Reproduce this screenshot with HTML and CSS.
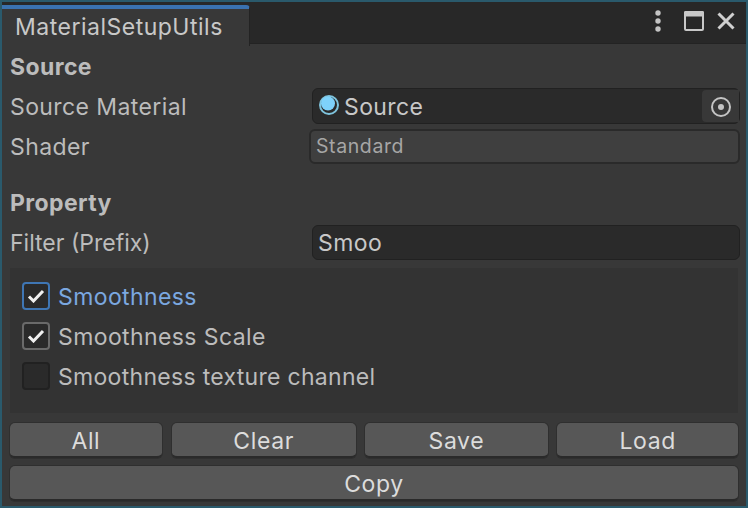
FILE: index.html
```html
<!DOCTYPE html>
<html lang="en">
<head>
<meta charset="utf-8">
<title>MaterialSetupUtils</title>
<link rel="stylesheet" href="styles.css">
</head>
<body>
<div class="window">
  <div class="tabbar">
    <div class="tab"><span>MaterialSetupUtils</span></div>
    <div class="win-icons">
      <svg class="ic-dots" width="8" height="24" viewBox="0 0 8 24"><circle cx="4" cy="4" r="2.7"/><circle cx="4" cy="12" r="2.7"/><circle cx="4" cy="20" r="2.7"/></svg>
      <svg class="ic-max" width="20" height="20" viewBox="0 0 20 20"><path class="max-top" d="M0 1.5a1.5 1.5 0 0 1 1.5-1.5h17a1.5 1.5 0 0 1 1.5 1.5v4H0z"/><rect class="max-box" x="1" y="1" width="18" height="18" rx="1"/></svg>
      <svg class="ic-close" width="18" height="18" viewBox="0 0 18 18"><path d="M1.5 1.5l15 15M16.5 1.5l-15 15"/></svg>
    </div>
  </div>
  <div class="content">
    <div class="heading h-source">Source</div>
    <div class="row r-material">
      <div class="label">Source Material</div>
      <div class="objfield">
        <svg class="ic-mat" width="20" height="20" viewBox="0 0 20 20"><circle class="mat-ring" cx="10" cy="10" r="9"/><circle class="mat-ball" cx="9" cy="8.5" r="7"/></svg>
        <span class="objname">Source</span>
        <div class="picker"><svg width="20" height="20" viewBox="0 0 20 20"><circle class="pick-ring" cx="10" cy="10" r="9"/><circle class="pick-dot" cx="10" cy="10" r="3"/></svg></div>
      </div>
    </div>
    <div class="row r-shader">
      <div class="label">Shader</div>
      <div class="shaderfield">Standard</div>
    </div>
    <div class="heading h-property">Property</div>
    <div class="row r-filter">
      <div class="label label-tight">Filter (Prefix)</div>
      <div class="textfield">Smoo</div>
    </div>
    <div class="panel">
      <div class="check-row focus">
        <div class="box"><svg width="18" height="14" viewBox="0 0 18 14"><path d="M2 7.5l4.5 4.5L16 2"/></svg></div>
        <span>Smoothness</span>
      </div>
      <div class="check-row on">
        <div class="box"><svg width="18" height="14" viewBox="0 0 18 14"><path d="M2 7.5l4.5 4.5L16 2"/></svg></div>
        <span>Smoothness Scale</span>
      </div>
      <div class="check-row">
        <div class="box"></div>
        <span class="label-long">Smoothness texture channel</span>
      </div>
    </div>
    <div class="buttons">
      <button class="btn b-all">All</button>
      <button class="btn b-clear">Clear</button>
      <button class="btn b-save">Save</button>
      <button class="btn b-load">Load</button>
    </div>
    <button class="btn b-copy">Copy</button>
  </div>
</div>
</body>
</html>
```

FILE: styles.css
```css
* { box-sizing: border-box; }
html, body { margin: 0; padding: 0; }
body {
  width: 748px;
  height: 508px;
  overflow: hidden;
  background: #2a5a6c;
  font-family: Inter, "Noto Sans", sans-serif;
  font-size: 23px;
  letter-spacing: 0.4px;
  color: #bcbcbc;
}
.window {
  margin: 2px;
  height: 504px;
  background: #383838;
  display: flex;
  flex-direction: column;
}
.tabbar {
  height: 42px;
  flex: none;
  background: #282828;
  border-bottom: 1px solid #232323;
  display: flex;
  justify-content: space-between;
}
.tab {
  width: 248px;
  height: 41px;
  margin-top: 3px;
  background: #383838;
  border-top: 4px solid #3a72b0;
  border-top-right-radius: 4px;
  padding-left: 13px;
  border-right: 1px solid #232323;
  line-height: 36px;
  letter-spacing: 0.5px;
  color: #c8c8c8;
  white-space: nowrap;
}
.win-icons {
  display: flex;
  align-items: center;
  padding-right: 11px;
  padding-bottom: 3px;
}
.ic-dots { fill: #c4c4c4; margin-right: 22px; }
.ic-max { margin-right: 13px; }
.max-top { fill: #c8c8c8; }
.max-box { fill: none; stroke: #c8c8c8; stroke-width: 2; }
.ic-close { fill: none; stroke: #d0d0d0; stroke-width: 3; }
.content {
  flex: 1;
  padding: 0 8px;
  display: flex;
  flex-direction: column;
}
.heading {
  font-weight: 700;
  letter-spacing: 0.4px;
  color: #bcbcbc;
  line-height: 34px;
  height: 34px;
}
.h-source { margin-top: 6px; }
.h-property { margin-top: 22px; }
.row {
  display: flex;
  align-items: center;
  height: 36px;
  margin-top: 4px;
}
.label {
  width: 299px;
  padding-top: 2px;
  flex: none;
}
.label-tight { letter-spacing: 0; }
.label-long { letter-spacing: 0.3px; }
.objfield {
  margin-left: 3px;
  width: 428px;
  flex: none;
  height: 36px;
  background: #2a2a2a;
  border: 1px solid #212121;
  border-radius: 6px;
  display: flex;
  align-items: center;
  padding-left: 6px;
  color: #c8c8c8;
}
.ic-mat { flex: none; margin-bottom: 2px; }
.mat-ring { fill: #2a2a2a; stroke: #7fc4dd; stroke-width: 2; }
.mat-ball { fill: #7ed2fb; }
.objname { margin-left: 5px; flex: 1; padding-top: 2px; }
.picker {
  width: 37px;
  height: 32px;
  background: #383838;
  border-radius: 4px 0 0 4px;
  display: flex;
  align-items: center;
  justify-content: center;
  padding-top: 1px;
  flex: none;
}
.pick-ring { fill: none; stroke: #c4c4c4; stroke-width: 2; }
.pick-dot { fill: #c4c4c4; }
.shaderfield {
  width: 431px;
  flex: none;
  height: 35px;
  background: #3f3f3f;
  border: 2px solid #2a2a2a;
  border-radius: 6px;
  padding-left: 5px;
  font-size: 19.5px;
  line-height: 31px;
  letter-spacing: 0.6px;
  color: #a6a6a6;
}
.textfield {
  margin-left: 3px;
  width: 428px;
  flex: none;
  height: 35px;
  background: #2a2a2a;
  border: 1px solid #212121;
  border-radius: 6px;
  padding-left: 5px;
  line-height: 35px;
  color: #c8c8c8;
}
.panel {
  margin-top: 8px;
  height: 145px;
  background: #333333;
  padding: 14px 12px 0;
  display: flex;
  flex-direction: column;
  gap: 12px;
}
.check-row {
  display: flex;
  align-items: center;
  height: 28px;
  gap: 8px;
}
.check-row span { padding-top: 2px; }
.box {
  width: 28px;
  height: 28px;
  flex: none;
  background: #2a2a2a;
  border: 2px solid #212121;
  border-radius: 4px;
  display: flex;
  align-items: center;
  justify-content: center;
}
.box svg { fill: none; stroke: #f0f0f0; stroke-width: 3; }
.check-row.on .box { border-color: #6a6a6a; }
.check-row.focus .box { border-color: #3f76b4; }
.check-row.focus span { color: #7ba8e0; }
.buttons {
  margin-top: 10px;
  display: flex;
  gap: 8px;
}
.btn {
  font: inherit;
  letter-spacing: 0.6px;
  color: #dcdcdc;
  background: #575757;
  border: none;
  border-bottom: 2px solid #2a2a2a;
  box-shadow: 0 0 0 1px #2f2f2f;
  border-radius: 5px;
  height: 35px;
  padding: 4px 0 0;
  line-height: 29px;
}
.b-all { width: 152px; }
.b-clear { width: 184px; margin-left: 2px; }
.b-save { width: 184px; margin-left: 1px; }
.b-load { width: 181px; margin-left: 1px; }
.b-copy { width: 728px; height: 35px; margin-top: 8px; flex: none; }
```
